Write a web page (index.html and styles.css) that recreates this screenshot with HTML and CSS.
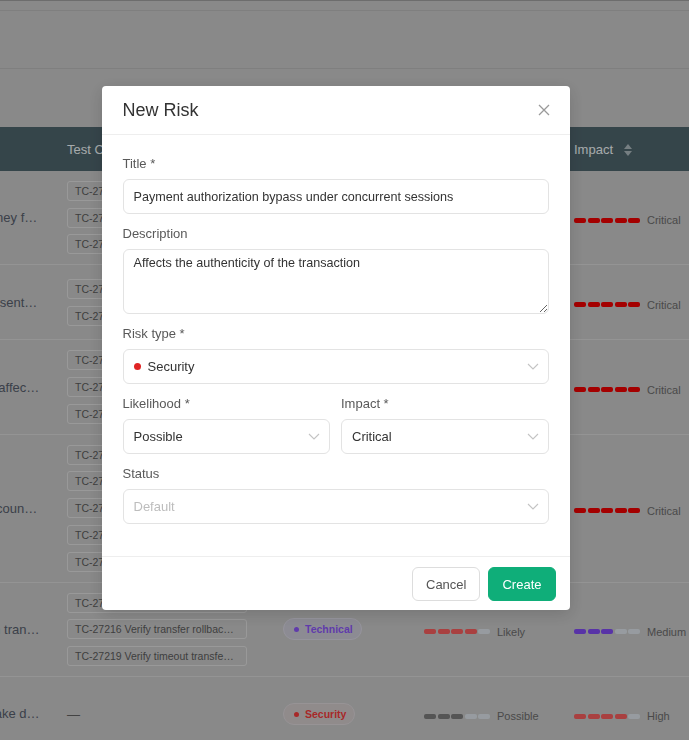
FILE: index.html
```html
<!DOCTYPE html>
<html lang="en">
<head>
    <meta charset="UTF-8">
    <meta name="viewport" content="width=device-width, initial-scale=1.0">
    <title>Risks</title>
    <link rel="stylesheet" href="styles.css">
</head>
<body>
    <div class="page">
        <div class="topbar"></div>
        <div class="filters"></div>
        <div class="toolbar"></div>

        <table class="risk-table">
            <colgroup>
                <col class="col-title">
                <col class="col-cases">
                <col class="col-type">
                <col class="col-likelihood">
                <col class="col-impact">
            </colgroup>
            <thead>
                <tr>
                    <th>Title</th>
                    <th>Test Cases</th>
                    <th>Risk type</th>
                    <th>Likelihood</th>
                    <th>Impact <span class="sort"><i class="up"></i><i class="down"></i></span></th>
                </tr>
            </thead>
            <tbody>
                <tr>
                    <td class="cell-title">Fees lost when money fails to settle</td>
                    <td>
                        <div class="cases">
                            <span class="case">TC-27201 Verify duplicate debit on retry</span>
                            <span class="case">TC-27202 Verify idempotency key reuse</span>
                            <span class="case">TC-27204 Verify ledger reconciliation</span>
                        </div>
                    </td>
                    <td><span class="pill security"><i></i>Security</span></td>
                    <td><span class="level"><span class="bars red"><i></i><i></i><i></i><i></i><b></b></span><span class="level-label">Likely</span></span></td>
                    <td><span class="level"><span class="bars crit"><i></i><i></i><i></i><i></i><i></i></span><span class="level-label">Critical</span></span></td>
                </tr>
                <tr>
                    <td class="cell-title">Misleading fees presentation</td>
                    <td>
                        <div class="cases">
                            <span class="case">TC-27207 Verify fee summary is shown</span>
                            <span class="case">TC-27208 Verify fee breakdown totals</span>
                        </div>
                    </td>
                    <td><span class="pill security"><i></i>Security</span></td>
                    <td><span class="level"><span class="bars grey"><i></i><i></i><i></i><b></b><b></b></span><span class="level-label">Possible</span></span></td>
                    <td><span class="level"><span class="bars crit"><i></i><i></i><i></i><i></i><i></i></span><span class="level-label">Critical</span></span></td>
                </tr>
                <tr>
                    <td class="cell-title">Outage of provider affecting payouts</td>
                    <td>
                        <div class="cases">
                            <span class="case">TC-27210 Verify provider failover</span>
                            <span class="case">TC-27211 Verify retry with backoff</span>
                            <span class="case">TC-27212 Verify status page update</span>
                        </div>
                    </td>
                    <td><span class="pill technical"><i></i>Technical</span></td>
                    <td><span class="level"><span class="bars red"><i></i><i></i><i></i><i></i><b></b></span><span class="level-label">Likely</span></span></td>
                    <td><span class="level"><span class="bars crit"><i></i><i></i><i></i><i></i><i></i></span><span class="level-label">Critical</span></span></td>
                </tr>
                <tr>
                    <td class="cell-title">Takeover of any account via SMS</td>
                    <td>
                        <div class="cases">
                            <span class="case">TC-27213 Verify lockout after failures</span>
                            <span class="case">TC-27214 Verify 2FA on new device</span>
                            <span class="case">TC-27215 Verify session revocation</span>
                            <span class="case">TC-27217 Verify password reset flow</span>
                            <span class="case">TC-27218 Verify login notification</span>
                        </div>
                    </td>
                    <td><span class="pill security"><i></i>Security</span></td>
                    <td><span class="level"><span class="bars grey"><i></i><i></i><i></i><b></b><b></b></span><span class="level-label">Possible</span></span></td>
                    <td><span class="level"><span class="bars crit"><i></i><i></i><i></i><i></i><i></i></span><span class="level-label">Critical</span></span></td>
                </tr>
                <tr>
                    <td class="cell-title">Rollback failures on transfers</td>
                    <td>
                        <div class="cases">
                            <span class="case">TC-27209 Verify partial transfer state</span>
                            <span class="case">TC-27216 Verify transfer rollback on error</span>
                            <span class="case">TC-27219 Verify timeout transfer handling</span>
                        </div>
                    </td>
                    <td><span class="pill technical"><i></i>Technical</span></td>
                    <td><span class="level"><span class="bars red"><i></i><i></i><i></i><i></i><b></b></span><span class="level-label">Likely</span></span></td>
                    <td><span class="level"><span class="bars purple"><i></i><i></i><i></i><b></b><b></b></span><span class="level-label">Medium</span></span></td>
                </tr>
                <tr>
                    <td class="cell-title">Phishing sites via fake domains</td>
                    <td><span class="dash">—</span></td>
                    <td><span class="pill security"><i></i>Security</span></td>
                    <td><span class="level"><span class="bars grey"><i></i><i></i><i></i><b></b><b></b></span><span class="level-label">Possible</span></span></td>
                    <td><span class="level"><span class="bars red"><i></i><i></i><i></i><i></i><b></b></span><span class="level-label">High</span></span></td>
                </tr>
            </tbody>
        </table>
    </div>

    <div class="mask">
        <div class="modal">
            <div class="modal-header">
                <h2 class="modal-title">New Risk</h2>
                <svg class="close" width="12" height="12" viewBox="0 0 12 12">
                    <path d="M1 1L11 11M11 1L1 11" stroke="#9a9a9a" stroke-width="1.3" fill="none"/>
                </svg>
            </div>

            <div class="modal-body">
                <div class="field">
                    <label>Title *</label>
                    <div class="input text">Payment authorization bypass under concurrent sessions</div>
                </div>

                <div class="field">
                    <label>Description</label>
                    <textarea class="textarea">Affects the authenticity of the transaction</textarea>
                </div>

                <div class="field">
                    <label>Risk type *</label>
                    <div class="input select">
                        <span class="value"><span class="dot"></span>Security</span>
                        <svg class="chevron" width="12" height="7" viewBox="0 0 12 7"><path d="M1 1L6 6L11 1" stroke="#c4c4c4" stroke-width="1.1" fill="none"/></svg>
                    </div>
                </div>

                <div class="field-row">
                    <div class="field">
                        <label>Likelihood *</label>
                        <div class="input select">
                            <span class="value">Possible</span>
                            <svg class="chevron" width="12" height="7" viewBox="0 0 12 7"><path d="M1 1L6 6L11 1" stroke="#c4c4c4" stroke-width="1.1" fill="none"/></svg>
                        </div>
                    </div>
                    <div class="field">
                        <label>Impact *</label>
                        <div class="input select">
                            <span class="value">Critical</span>
                            <svg class="chevron" width="12" height="7" viewBox="0 0 12 7"><path d="M1 1L6 6L11 1" stroke="#c4c4c4" stroke-width="1.1" fill="none"/></svg>
                        </div>
                    </div>
                </div>

                <div class="field">
                    <label>Status</label>
                    <div class="input select">
                        <span class="value placeholder">Default</span>
                        <svg class="chevron" width="12" height="7" viewBox="0 0 12 7"><path d="M1 1L6 6L11 1" stroke="#c4c4c4" stroke-width="1.1" fill="none"/></svg>
                    </div>
                </div>
            </div>

            <div class="modal-footer">
                <button class="btn">Cancel</button>
                <button class="btn primary">Create</button>
            </div>
        </div>
    </div>
</body>
</html>
```

FILE: styles.css
```css
body {
    margin: 0;
    font-family: "Liberation Sans", Arial, sans-serif;
    background-color: #c4c4c4;
    overflow: hidden;
}

/* page behind the dialog */

.page {
    border-top: 1px solid #9d9d9d;
}

.topbar {
    height: 9px;
    border-bottom: 1px solid #b7b7b7;
}

.filters {
    height: 57px;
    border-bottom: 1px solid #b7b7b7;
}

.toolbar {
    height: 58px;
}

.risk-table {
    margin-left: -125px;
    width: 847px;
    table-layout: fixed;
    border-collapse: collapse;
}

.col-title { width: 180px; }
.col-cases { width: 216px; }
.col-type { width: 141px; }
.col-likelihood { width: 150px; }
.col-impact { width: 160px; }

.risk-table th {
    height: 44px;
    padding: 0 12px;
    background: #4d636b;
    color: #eef4f6;
    font-size: 13px;
    font-weight: normal;
    text-align: left;
    white-space: nowrap;
}

.sort {
    display: inline-flex;
    flex-direction: column;
    gap: 2px;
    margin-left: 7px;
    vertical-align: middle;
}

.sort i {
    width: 0;
    height: 0;
    border-left: 4px solid transparent;
    border-right: 4px solid transparent;
}

.sort .up {
    border-bottom: 5px solid #a9b6bb;
}

.sort .down {
    border-top: 5px solid #a9b6bb;
}

.risk-table td {
    height: 75px;
    padding: 10px 12px;
    border-bottom: 1px solid #d5d5d5;
    vertical-align: middle;
    box-sizing: border-box;
}

.risk-table td.cell-title {
    padding-right: 15px;
    font-size: 13px;
    color: #555c6a;
    white-space: nowrap;
    overflow: hidden;
    text-overflow: ellipsis;
}

.cases {
    display: flex;
    flex-direction: column;
    gap: 6.7px;
}

.case {
    width: 180px;
    height: 20px;
    line-height: 18px;
    box-sizing: border-box;
    padding: 0 9px 0 7px;
    border: 1px solid #dcdcdc;
    border-radius: 3px;
    font-size: 10.5px;
    color: #5a5a5a;
    white-space: nowrap;
    overflow: hidden;
    text-overflow: ellipsis;
}

.dash {
    font-size: 13px;
    color: #616161;
}

.pill {
    display: inline-flex;
    align-items: center;
    gap: 6px;
    height: 22px;
    padding: 0 8px 0 10px;
    box-sizing: border-box;
    border-radius: 11px;
    font-size: 10.5px;
    font-weight: bold;
}

.pill i {
    width: 5px;
    height: 5px;
    border-radius: 50%;
}

.pill.technical {
    color: #8a55f5;
    background: #c9c8d3;
    border: 1px solid #d6d4e0;
}

.pill.technical i {
    background: #8a55f5;
}

.pill.security {
    color: #f03a3a;
    background: #cfc7c8;
    border: 1px solid #d8d3d6;
}

.pill.security i {
    background: #f03a3a;
}

.level {
    display: inline-flex;
    align-items: center;
    white-space: nowrap;
}

.bars {
    display: inline-flex;
    gap: 1.5px;
}

.bars i,
.bars b {
    width: 12px;
    height: 5px;
    border-radius: 2px;
}

.bars b {
    background: #d8dfe6;
}

.bars.crit i { background: #eb0000; }
.bars.red i { background: #f25c5c; }
.bars.purple i { background: #7f4af0; }
.bars.grey i { background: #7a7a7a; }

.level-label {
    margin-left: 7px;
    font-size: 11px;
    color: #6a6a6a;
}

/* dialog */

.mask {
    position: fixed;
    inset: 0;
    background: rgba(0, 0, 0, 0.3);
    display: flex;
    justify-content: center;
    align-items: flex-start;
    padding: 86px 18px 0 0;
    box-sizing: border-box;
}

.modal {
    width: 468px;
    background: #fff;
    border-radius: 4px;
    box-shadow: 0 4px 16px rgba(0, 0, 0, 0.15);
}

.modal-header {
    height: 48px;
    display: flex;
    align-items: center;
    justify-content: space-between;
    padding: 0 20px 0 21px;
    border-bottom: 1px solid #eeeeee;
}

.modal-title {
    margin: 0;
    font-size: 18px;
    font-weight: normal;
    color: #333;
}

.modal-body {
    padding: 21px 21px 20px;
}

.field {
    margin-bottom: 12px;
}

.field label {
    display: block;
    margin-bottom: 7px;
    font-size: 13px;
    line-height: 16px;
    color: #595959;
}

.field-row {
    display: grid;
    grid-template-columns: 1fr 1fr;
    gap: 11px;
}

.input {
    height: 35px;
    box-sizing: border-box;
    display: flex;
    align-items: center;
    padding: 0 10px;
    border: 1px solid #e3e3e3;
    border-radius: 6px;
    font-size: 13px;
    color: #333;
    white-space: nowrap;
    overflow: hidden;
}

.input.text {
    font-size: 12.6px;
}

.textarea {
    display: block;
    width: 100%;
    height: 65px;
    box-sizing: border-box;
    padding: 5px 10px;
    border: 1px solid #e3e3e3;
    border-radius: 6px;
    font-family: inherit;
    font-size: 12.6px;
    line-height: 16px;
    color: #333;
}

.select {
    justify-content: space-between;
    padding-right: 9px;
}

.value {
    display: flex;
    align-items: center;
}

.placeholder {
    color: #bdbdbd;
}

.dot {
    width: 7px;
    height: 7px;
    margin-right: 7px;
    border-radius: 50%;
    background: #e02424;
}

.modal-footer {
    display: flex;
    justify-content: flex-end;
    gap: 8px;
    padding: 10px 14px 9px;
    border-top: 1px solid #eeeeee;
}

.btn {
    height: 34px;
    padding: 0 13px;
    border: 1px solid #dddddd;
    border-radius: 6px;
    background: #fff;
    font-family: inherit;
    font-size: 13px;
    color: #555;
    cursor: pointer;
}

.btn.primary {
    border-color: #0fae79;
    background: #0fae79;
    color: #fff;
}
```
